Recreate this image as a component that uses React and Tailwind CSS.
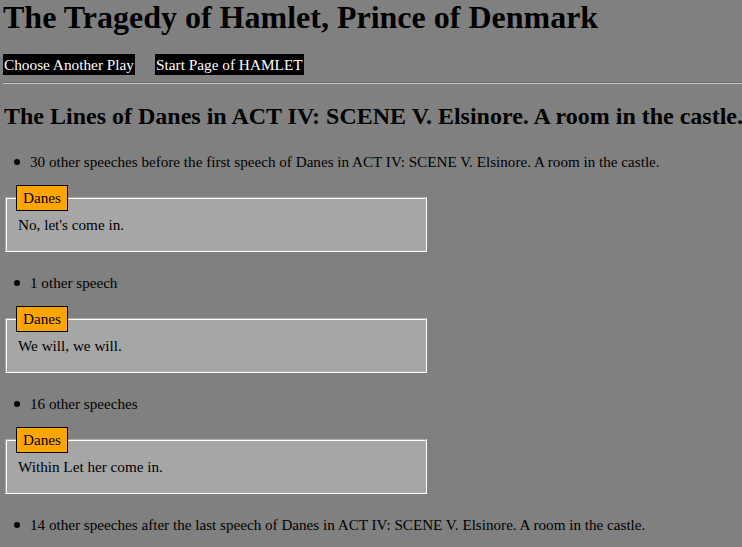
import React from 'react';

const sections = [
  { before: '30 other speeches before the first speech of Danes in ACT IV: SCENE V. Elsinore. A room in the castle.', line: "No, let's come in." },
  { before: '1 other speech', line: 'We will, we will.' },
  { before: '16 other speeches', line: 'Within Let her come in.' },
];

const Speech = ({ speaker, text }) => (
  <fieldset className="ml-[5px] w-[422px] border-2 border-white [border-style:groove] bg-[#a6a6a6] px-[8px] pb-[16px] pt-0">
    <legend className="ml-[1px] border border-black bg-[#ffa500] px-[6px] py-[3px] text-[15.2px] leading-[18px]">
      {speaker}
    </legend>
    <p className="pl-[3px] pt-[5px] text-[15.2px] leading-[18px]">{text}</p>
  </fieldset>
);

const Bullet = ({ children }) => (
  <li className="flex items-center gap-[10px] pl-[14px] text-[15.15px] leading-[18px]">
    <span className="h-[6px] w-[6px] rounded-full bg-black" />
    <span>{children}</span>
  </li>
);

export default function App() {
  return (
    <div className="min-h-screen bg-[#808080] font-['Liberation_Serif',serif] text-black">
      <h1 className="pl-[3px] text-[32px] font-bold leading-[34px]">
        The Tragedy of Hamlet, Prince of Denmark
      </h1>

      <div className="mt-[20px] flex gap-[20px] pl-[3px] text-[15.3px] leading-[21px]">
        <a href="#" className="bg-black px-[1px] text-white">Choose Another Play</a>
        <a href="#" className="bg-black px-[1px] text-white">Start Page of HAMLET</a>
      </div>

      <hr className="ml-[3px] mt-[7px] border-0 border-t border-t-[#6a6a6a] border-b border-b-[#c8c8c8]" />

      <h2 className="mt-[18px] whitespace-nowrap pl-[4px] text-[24px] font-bold leading-[28px]">
        The Lines of Danes in ACT IV: SCENE V. Elsinore. A room in the castle.
      </h2>

      <ul className="mt-[23px]">
        {sections.map((s, i) => (
          <React.Fragment key={i}>
            <Bullet>{s.before}</Bullet>
            <div className="mt-[14px] mb-[22px]">
              <Speech speaker="Danes" text={s.line} />
            </div>
          </React.Fragment>
        ))}
        <Bullet>14 other speeches after the last speech of Danes in ACT IV: SCENE V. Elsinore. A room in the castle.</Bullet>
      </ul>
    </div>
  );
}
